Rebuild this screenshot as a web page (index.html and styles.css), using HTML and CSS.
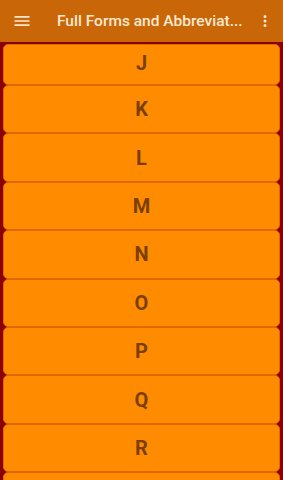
FILE: index.html
```html
<!DOCTYPE html>
<html lang="en">
<head>
    <meta charset="UTF-8">
    <meta name="viewport" content="width=device-width, initial-scale=1.0">
    <title>Full Forms and Abbreviations</title>
    <link rel="stylesheet" href="styles.css">
</head>
<body>

    <header class="app-bar">
        <button class="icon-button menu-button" aria-label="Menu">
            <svg width="18" height="18" viewBox="0 0 24 24"><path d="M3 6h18v2H3zm0 5h18v2H3zm0 5h18v2H3z" fill="#fbe9d0"/></svg>
        </button>
        <h1 class="title">Full Forms and Abbreviat...</h1>
        <button class="icon-button more-button" aria-label="More">
            <svg width="18" height="18" viewBox="0 0 24 24"><path d="M12 8a2 2 0 1 0 0-4 2 2 0 0 0 0 4zm0 2a2 2 0 1 0 0 4 2 2 0 0 0 0-4zm0 6a2 2 0 1 0 0 4 2 2 0 0 0 0-4z" fill="#fbe9d0"/></svg>
        </button>
    </header>

    <div class="letter-list">
        <div class="letter-card first">J</div>
        <div class="letter-card">K</div>
        <div class="letter-card">L</div>
        <div class="letter-card">M</div>
        <div class="letter-card">N</div>
        <div class="letter-card">O</div>
        <div class="letter-card">P</div>
        <div class="letter-card">Q</div>
        <div class="letter-card">R</div>
        <!-- next card only peeks in at the bottom -->
        <div class="letter-card"></div>
    </div>

</body>
</html>
```

FILE: styles.css
```css
  * {
      box-sizing: border-box;
  }
  body {
      font-family: Roboto, "Liberation Sans", sans-serif;
      background-color: #8b0000;
      margin: 0;
      height: 480px;
      overflow: hidden;
  }
  .app-bar {
      background-color: #c96608;
      height: 42px;
      display: flex;
      align-items: center;
      padding: 0 6px 0 12px;
  }
  .icon-button {
      background: none;
      border: none;
      padding: 0;
      width: 20px;
      height: 20px;
      display: flex;
      align-items: center;
      justify-content: center;
  }
  .menu-button svg {
      width: 20px;
      height: 20px;
  }
  .title {
      flex: 1;
      margin: 0 0 0 25px;
      font-size: 15.5px;
      font-weight: 500;
      color: #fbe9d0;
      white-space: nowrap;
  }
  .more-button {
      margin-right: 2px;
  }
  .letter-list {
      padding: 2px 3px 0;
  }
  .letter-card {
      background-color: #ff8c00;
      border: 1px solid #e06a00;
      border-radius: 5px;
      height: 48.4px;
      display: flex;
      align-items: center;
      justify-content: center;
      font-size: 20px;
      font-weight: 700;
      color: #7a3f00;
  }
  .letter-card.first {
      height: 41px;
      padding-bottom: 4px;
  }
```
